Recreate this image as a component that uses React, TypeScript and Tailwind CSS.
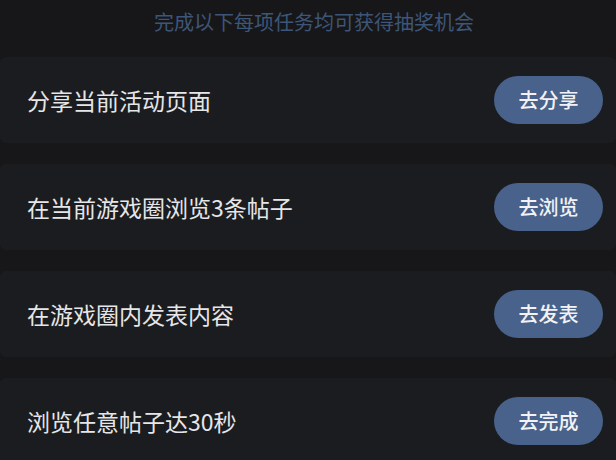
import React from 'react';

interface Task {
  title: string;
  action: string;
}

const tasks: Task[] = [
  { title: '分享当前活动页面', action: '去分享' },
  { title: '在当前游戏圈浏览3条帖子', action: '去浏览' },
  { title: '在游戏圈内发表内容', action: '去发表' },
  { title: '浏览任意帖子达30秒', action: '去完成' },
];

const TaskRow: React.FC<{ task: Task }> = ({ task }) => (
  <div className="flex h-[86px] items-center justify-between rounded-md bg-[#1b1c1f] pl-[27px] pr-[13px]">
    <span className="text-[23px] leading-none text-[#e6e6e8]">{task.title}</span>
    <button className="flex h-[48px] w-[109px] items-center justify-center rounded-full bg-[#48628b] text-[20px] font-medium text-[#f2f2f4]">
      {task.action}
    </button>
  </div>
);

export default function App() {
  return (
    <div
      className="h-[460px] w-[616px] overflow-hidden bg-[#171719]"
      style={{ fontFamily: '"Noto Sans CJK SC", "Noto Sans", sans-serif' }}
    >
      <div className="flex h-[57px] items-start justify-center pl-[12px] pt-[9px]">
        <span className="text-[20px] leading-[26px] text-[#3d5678]">完成以下每项任务均可获得抽奖机会</span>
      </div>
      <div className="flex flex-col gap-[21px]">
        {tasks.map((t) => (
          <TaskRow key={t.action} task={t} />
        ))}
      </div>
    </div>
  );
}
